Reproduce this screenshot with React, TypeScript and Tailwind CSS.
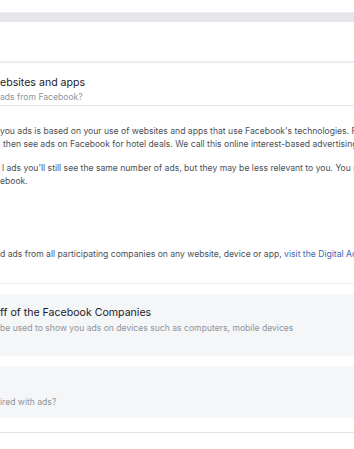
const Line = ({ children, className = "" }: { children: React.ReactNode; className?: string }) => (
  <div className={`whitespace-nowrap leading-[12.5px] ${className}`}>{children}</div>
);

export default function App() {
  return (
    <div className="w-[354px] h-[449px] overflow-hidden bg-white font-['Inter',sans-serif] text-[8.6px] text-[#4b4f56]">
      <div className="h-3" />
      <div className="h-[10px] bg-[#e5e6ea] border-t border-[#eeeff2]" />
      <div className="h-[39px]" />

      <section className="border-t-2 border-b border-[#ebedf0]">
        <div className="pt-[13px] pb-[2px] border-b border-[#e5e6e9]">
          <div className="whitespace-nowrap text-[10.6px] leading-[14px] text-[#1d2129]">ebsites and apps</div>
          <div className="mt-px whitespace-nowrap leading-[12px] text-[#90949c]">ads from Facebook?</div>
        </div>

        <div className="pt-[19px] pb-[22px]">
          <Line>you ads is based on your use of websites and apps that use Facebook's technologies. For</Line>
          <Line className="pl-[3px]">then see ads on Facebook for hotel deals. We call this online interest-based advertising.</Line>
          <div className="h-3" />
          <Line className="pl-[2px]">l ads you'll still see the same number of ads, but they may be less relevant to you. You may</Line>
          <Line>ebook.</Line>
          <div className="h-[61px]" />
          <Line>
            d ads from all participating companies on any website, device or app,{" "}
            <span className="text-[#4267b2]">visit the Digital Advertising Alliance</span>
          </Line>
        </div>
      </section>

      <div className="h-[10px]" />
      <div className="h-[62px] bg-[#f5f6f7] pt-3">
        <div className="whitespace-nowrap text-[10.6px] leading-[14px] text-[#1d2129]">ff of the Facebook Companies</div>
        <div className="mt-[2px] whitespace-nowrap leading-[12px] text-[#90949c]">
          be used to show you ads on devices such as computers, mobile devices
        </div>
      </div>

      <div className="h-[10px]" />
      <div className="h-[52px] bg-[#f5f6f7] pt-[30px]">
        <div className="whitespace-nowrap leading-[12px] text-[#90949c]">ired with ads?</div>
      </div>

      <div className="h-[14px]" />
      <div className="h-px bg-[#e3e4e7]" />
    </div>
  );
}
